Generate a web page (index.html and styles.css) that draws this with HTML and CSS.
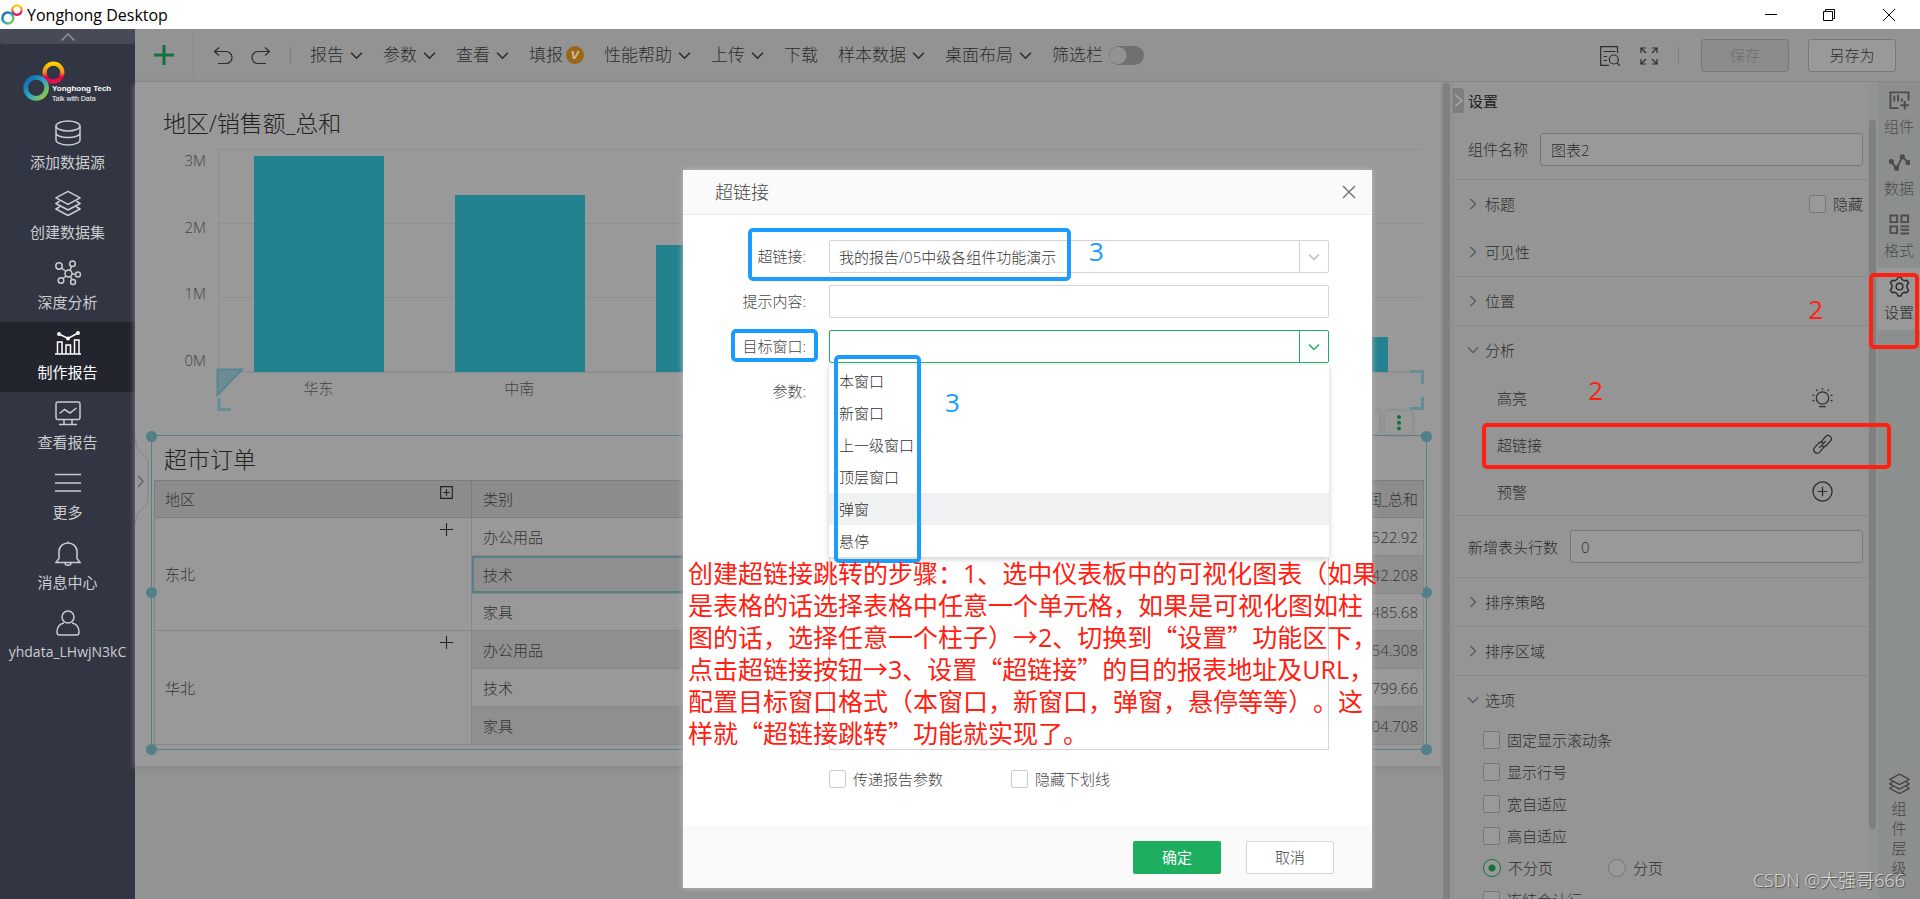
FILE: index.html
```html
<!DOCTYPE html>
<html lang="zh-CN">
<head>
<meta charset="utf-8">
<title>Yonghong Desktop</title>
<link rel="stylesheet" href="styles.css">
</head>
<body>
<svg class="defs" aria-hidden="true">
  <defs>
    <linearGradient id="warm" x1="0" y1="0" x2="0" y2="1"><stop offset="0" stop-color="#fdd000"/><stop offset=".5" stop-color="#f08a1d"/><stop offset=".75" stop-color="#e6004c"/><stop offset="1" stop-color="#e6104c"/></linearGradient>
    <linearGradient id="cool" x1="0" y1="0" x2="1" y2="1"><stop offset="0" stop-color="#0f5fae"/><stop offset=".5" stop-color="#28a5c4"/><stop offset="1" stop-color="#9fd02f"/></linearGradient>
    <symbol id="rings" viewBox="0 0 40 38">
      <circle cx="29" cy="11" r="8.500" fill="none" stroke="url(#warm)" stroke-width="4"/>
      <circle cx="12.500" cy="25.500" r="10" fill="none" stroke="url(#cool)" stroke-width="4.500"/>
    </symbol>
    <symbol id="down" viewBox="0 0 12 12"><path d="M1 3.500l5 5 5-5" fill="none" stroke="currentColor" stroke-width="1.500"/></symbol>
    <symbol id="right" viewBox="0 0 12 12"><path d="M3.500 1l5 5-5 5" fill="none" stroke="currentColor" stroke-width="1.500"/></symbol>
    <symbol id="layers" viewBox="0 0 28 28"><path d="M14 1.500L27 8.500 14 15.500 1 8.500zM5 12l-4 2.500 13 7 13-7L23 12M5 18l-4 2.500 13 7 13-7L23 18" fill="none" stroke="currentColor" stroke-width="1.700" stroke-linejoin="round"/></symbol>
  </defs>
</svg>

<header class="titlebar">
  <svg class="titlebar-logo"><use href="#rings"/></svg>
  <h1 class="titlebar-name">Yonghong Desktop</h1>
  <div class="win-controls">
    <button class="win-btn" aria-label="最小化"><svg viewBox="0 0 12 12"><path d="M0 5.500h12"/></svg></button>
    <button class="win-btn" aria-label="还原"><svg viewBox="0 0 12 12"><path d="M.5 2.500h9v9h-9zM2.500 2.500v-2h9v9h-2"/></svg></button>
    <button class="win-btn" aria-label="关闭"><svg viewBox="0 0 12 12"><path d="M0 0l12 12M12 0L0 12"/></svg></button>
  </div>
</header>

<div class="app">
  <nav class="sidebar">
    <button class="sidebar-fold" aria-label="收起"><svg viewBox="0 0 14 8"><path d="M.5 7.500l6.500-6.500 6.500 6.500"/></svg></button>
    <div class="brand">
      <svg class="brand-mark"><use href="#rings"/></svg>
      <div class="brand-text"><strong>Yonghong Tech</strong><span>Talk with Data</span></div>
    </div>
    <a class="nav-item" href="#"><svg viewBox="0 0 26 26"><ellipse cx="13" cy="6" rx="12" ry="5"/><path d="M1 6v14c0 2.500 5 5 12 5s12-2.500 12-5V6M1 13c0 2.500 5 4.500 12 4.500S25 15.500 25 13"/></svg>添加数据源</a>
    <a class="nav-item" href="#"><svg><use href="#layers"/></svg>创建数据集</a>
    <a class="nav-item" href="#"><svg viewBox="0 0 26 26"><circle cx="13.500" cy="13.500" r="3.500"/><circle cx="4" cy="6" r="3.200"/><circle cx="17.500" cy="3.800" r="2.800"/><circle cx="23" cy="14.500" r="2.500"/><circle cx="6" cy="20.500" r="2.800"/><circle cx="18" cy="22" r="2.500"/><path d="M6.500 8l4.500 3.500M16.500 6.500l-1.500 4M17 14h3.500M8 18.500l3-2.500M15.500 16.500l1.500 3.300"/></svg>深度分析</a>
    <a class="nav-item active" href="#"><svg viewBox="0 0 26 26"><path d="M0 24h26M2.500 24V12h4.500v12M11 24v-9h4.500v9M19.500 24V10H24v14M4 4l9 4.500L23 3"/><circle cx="4" cy="4" r="1.200"/><circle cx="13" cy="8.500" r="1.200"/><circle cx="23" cy="3" r="1.200"/></svg>制作报告</a>
    <a class="nav-item" href="#"><svg viewBox="0 0 26 26"><rect x="1" y="2" width="24" height="17.500" rx="2"/><path d="M4.500 13.500l5-4 5.500 3.500 6.500-5M9 20v4M17 20v4M4 24.500h18"/></svg>查看报告</a>
    <a class="nav-item" href="#"><svg viewBox="0 0 26 26"><path d="M0 4.500h26M0 13h26M0 21h26"/></svg>更多</a>
    <a class="nav-item" href="#"><svg viewBox="0 0 26 26"><path d="M13 1.500v1.500M1 22.500h24l-3-4v-7C22 6.500 18 3 13 3s-9 3.500-9 8.500v7zM10 23c0 3 6 3 6 0"/></svg>消息中心</a>
    <a class="nav-item" href="#"><svg viewBox="0 0 26 26"><circle cx="13" cy="7" r="6"/><path d="M9 13c-5 1-7 5-7 9 0 2 .5 3 2.500 3h17c2 0 2.500-1 2.500-3 0-4-2-8-7-9"/></svg><span class="user">yhdata_LHwjN3kC</span></a>
  </nav>

  <div class="workspace">
    <div class="toolbar">
      <button class="tool add" aria-label="新增"><svg viewBox="0 0 20 20"><path d="M10 0v20M0 10h20"/></svg></button>
      <div class="history">
        <button class="tool" aria-label="撤销"><svg viewBox="0 0 20 18"><path d="M6 .5L1.500 4.500 6 8.500M1.500 4.500H13a5.500 5.500 0 010 12H5"/></svg></button>
        <button class="tool" aria-label="重做"><svg viewBox="0 0 20 18"><path d="M14 .5l4.500 4-4.500 4M18.500 4.500H7a5.500 5.500 0 000 12h8"/></svg></button>
      </div>
      <div class="menus">
        <button class="menu">报告<svg><use href="#down"/></svg></button>
        <button class="menu">参数<svg><use href="#down"/></svg></button>
        <button class="menu">查看<svg><use href="#down"/></svg></button>
        <button class="menu tight">填报<i class="vip">v</i></button>
        <button class="menu">性能帮助<svg><use href="#down"/></svg></button>
        <button class="menu">上传<svg><use href="#down"/></svg></button>
        <button class="menu">下载</button>
        <button class="menu">样本数据<svg><use href="#down"/></svg></button>
        <button class="menu">桌面布局<svg><use href="#down"/></svg></button>
        <label class="menu">筛选栏<input class="toggle" type="checkbox" role="switch"></label>
      </div>
      <div class="tool-right">
        <button class="tool" aria-label="预览"><svg viewBox="0 0 20 20"><path d="M17.500 7V.7H.7v18.600H9M3.500 5.500h12M3.500 10.500H7M3.500 14.500H7"/><circle cx="13.800" cy="13.500" r="4.500"/><path d="M17 17l3 2.800"/></svg></button>
        <button class="tool" aria-label="全屏"><svg viewBox="0 0 20 20"><path d="M2 7V2h5M2 2l5 5M13 2h5v5M18 2l-5 5M2 13v5h5M2 18l5-5M18 13v5h-5M18 18l-5-5"/></svg></button>
      </div>
      <div class="save-group">
        <button class="btn-save" disabled>保存</button>
        <button class="btn-saveas">另存为</button>
      </div>
    </div>

    <div class="stage">
      <main class="canvas">
        <button class="canvas-expand" aria-label="展开"><svg viewBox="0 0 14 84"><path d="M.5 0C1 16 13 14 13 24v36C13 70 1 68 .5 84" class="tab"/><path d="M3 37l5 5.500L3 48"/></svg></button>
        <div class="sheet">
          <section class="chart">
            <h2 class="comp-title">地区/销售额_总和</h2>
            <div class="chart-body">
              <div class="y-axis"><span>3M</span><span>2M</span><span>1M</span><span>0M</span></div>
              <div class="plot-wrap">
                <div class="plot">
                  <div class="bar" style="height:216px"></div>
                  <div class="bar" style="height:177px"></div>
                  <div class="bar" style="height:127px"></div>
                  <div class="bar" style="height:100px"></div>
                  <div class="bar" style="height:70px"></div>
                  <div class="bar" style="height:35px"></div>
                </div>
                <div class="x-axis"><span>华东</span><span>中南</span><span></span><span></span><span></span><span></span></div>
                <svg class="corner-l" viewBox="0 0 30 44"><path d="M1.500 1.500H26L1.500 27z" class="tri"/><path d="M3 30v11.500h12" class="br"/></svg>
                <svg class="corner-r" viewBox="0 0 14 40"><path d="M0 1.500h12.500V14M0 38.500h12.500V27" class="br"/></svg>
              </div>
            </div>
          </section>

          <section class="report">
            <i class="knob tl"></i><i class="knob ml"></i><i class="knob bl"></i>
            <i class="knob tr"></i><i class="knob mr"></i><i class="knob brr"></i>
            <div class="float-tools"><i class="float-blank"></i><button class="float-btn" aria-label="更多操作"><svg viewBox="0 0 4 16"><circle cx="2" cy="2" r="2"/><circle cx="2" cy="7.700" r="2"/><circle cx="2" cy="13.500" r="2"/></svg></button></div>
            <h2 class="comp-title">超市订单</h2>
            <table class="grid">
              <thead><tr><th class="c1">地区<svg class="mark" viewBox="0 0 14 14"><path d="M.7.700h12.600v12.600H.7zM3.500 7h7M7 3.500v7"/></svg></th><th class="c2">类别</th><th class="num">利润_总和</th></tr></thead>
              <tbody>
                <tr><td class="c1" rowspan="3">东北<svg class="mark" viewBox="0 0 14 14"><path d="M0 7h14M7 0v14"/></svg></td><td>办公用品</td><td class="num">,522.92</td></tr>
                <tr class="alt"><td class="picked">技术</td><td class="num">42.208</td></tr>
                <tr><td>家具</td><td class="num">,485.68</td></tr>
                <tr class="alt"><td class="c1" rowspan="3">华北<svg class="mark" viewBox="0 0 14 14"><path d="M0 7h14M7 0v14"/></svg></td><td>办公用品</td><td class="num">354.308</td></tr>
                <tr><td>技术</td><td class="num">,799.66</td></tr>
                <tr class="alt"><td>家具</td><td class="num">304.708</td></tr>
              </tbody>
            </table>
          </section>
        </div>
      </main>
      <div class="scroll"><i class="thumb"></i></div>

      <aside class="panel">
        <div class="panel-head"><button class="panel-fold" aria-label="收起"><svg viewBox="0 0 10 16"><path d="M1.500 1.500L8.500 8l-7 6.500"/></svg></button><h2>设置</h2></div>
        <div class="field"><label for="cname">组件名称</label><input id="cname" type="text" value="图表2"></div>
        <div class="sec no-line"><button class="sec-btn"><svg><use href="#right"/></svg>标题</button><label class="check"><input type="checkbox">隐藏</label></div>
        <div class="sec"><button class="sec-btn"><svg><use href="#right"/></svg>可见性</button></div>
        <div class="sec"><button class="sec-btn"><svg><use href="#right"/></svg>位置</button></div>
        <div class="sec no-line"><button class="sec-btn"><svg><use href="#down"/></svg>分析</button></div>
        <div class="sub">
          <button class="sub-row">高亮<svg viewBox="0 0 22 22"><circle cx="11" cy="11.500" r="6.500"/><path d="M7.500 20.500h7M11 1v2M4.500 2.500l1 1.700M17.500 2.500l-1 1.700M.5 8.500l2 .5M21.500 8.500l-2 .5M.5 14.500l2-.5M21.500 14.500l-2-.5"/></svg></button>
          <button class="sub-row">超链接<svg viewBox="0 0 22 22"><path d="M8.500 9.500l6-7c1.500-1.500 3-1.500 4.500 0s2 3 .5 4.500l-5 5.500c-1.500 1.200-3.500 1-4.500-.5M13.500 12.500l-5.500 6.500c-1.500 1.500-3.500 1.500-5 .2s-1.800-3.200-.5-4.700l5-5.500c1.500-1.200 3.500-1 4.500.5M7.500 14.500l7-7"/></svg></button>
          <button class="sub-row">预警<svg viewBox="0 0 22 22"><circle cx="11" cy="11" r="10"/><path d="M6 11h10M11 6v10"/></svg></button>
        </div>
        <div class="field rows-field"><label for="rows">新增表头行数</label><input id="rows" type="text" value="0"></div>
        <div class="sec"><button class="sec-btn"><svg><use href="#right"/></svg>排序策略</button></div>
        <div class="sec"><button class="sec-btn"><svg><use href="#right"/></svg>排序区域</button></div>
        <div class="sec no-line"><button class="sec-btn"><svg><use href="#down"/></svg>选项</button></div>
        <div class="opts">
          <label class="check"><input type="checkbox">固定显示滚动条</label>
          <label class="check"><input type="checkbox">显示行号</label>
          <label class="check"><input type="checkbox">宽自适应</label>
          <label class="check"><input type="checkbox">高自适应</label>
          <div class="radios"><label class="check"><input type="radio" name="page" checked>不分页</label><label class="check"><input type="radio" name="page">分页</label></div>
          <label class="check"><input type="checkbox">冻结合计行</label>
        </div>
      </aside>
      <div class="scroll panel-scroll"><i class="thumb"></i></div>

      <nav class="strip">
        <a class="strip-item" href="#"><svg viewBox="0 0 22 20"><path d="M10 18H1.500V1.500h19V10M5.500 5v6M9.500 4v7M13.500 8v3M12 15h9M16.500 10.500v9"/></svg>组件</a>
        <a class="strip-item" href="#"><svg viewBox="0 0 22 20"><path d="M2 9l6 7 6-12 6 6"/><g class="dots"><circle cx="2.500" cy="9" r="1.700"/><circle cx="8" cy="16" r="1.700"/><circle cx="14" cy="4" r="1.700"/><circle cx="20" cy="10" r="1.700"/></g></svg>数据</a>
        <a class="strip-item" href="#"><svg viewBox="0 0 22 22"><path d="M1.500 1.500h7v7h-7zM13 1.500h7v7h-7zM1.500 13h7v7h-7zM12 13h9M12 16.500h9M12 20.500h9"/></svg>格式</a>
        <a class="strip-item on" href="#"><svg viewBox="0 0 22 22"><path d="M8.500 3.500L9.500 1h3l1 2.500 2.500 1.500L18.500 4.500 20.500 7 19 9.500v3l1.500 2.500-2 2.500-2.500-.5-2.500 1.500-1 2.500h-3l-1-2.500L6 17l-2.500.5-2-2.500L3 12.500v-3L1.500 7l2-2.500L6 5z"/><circle cx="11" cy="11" r="3.500"/></svg>设置</a>
        <a class="strip-item strip-last" href="#"><svg><use href="#layers"/></svg><span>组件层级</span></a>
      </nav>
    </div>

    <div class="overlay">
      <div class="dialog" role="dialog" aria-labelledby="dlg-title">
        <div class="dlg-head"><h2 id="dlg-title">超链接</h2><button class="dlg-close" aria-label="关闭"><svg viewBox="0 0 14 14"><path d="M1 1l12 12M13 1L1 13"/></svg></button></div>
        <div class="dlg-body">
          <label for="link">超链接:</label>
          <div class="combo"><select id="link"><option>我的报告/05中级各组件功能演示</option></select><span class="arrow"><svg><use href="#down"/></svg></span></div>
          <label for="tip">提示内容:</label>
          <input class="text" id="tip" type="text">
          <label for="target">目标窗口:</label>
          <div class="combo open"><select id="target"><option></option></select><span class="arrow"><svg><use href="#down"/></svg></span>
            <ul class="list"><li>本窗口</li><li>新窗口</li><li>上一级窗口</li><li>顶层窗口</li><li class="hover">弹窗</li><li>悬停</li></ul>
          </div>
          <label for="params">参数:</label>
          <textarea class="params" id="params"></textarea>
          <div class="dlg-checks"><label class="check"><input type="checkbox">传递报告参数</label><label class="check"><input type="checkbox">隐藏下划线</label></div>
        </div>
        <div class="dlg-foot"><button class="ok">确定</button><button class="cancel">取消</button></div>

        <i class="box blue box-link"></i><i class="box blue box-target"></i><i class="box blue box-list"></i>
        <b class="digit blue-text step-a">3</b><b class="digit blue-text step-b">3</b>
        <p class="note">创建超链接跳转的步骤：1、选中仪表板中的可视化图表（如果<br>是表格的话选择表格中任意一个单元格，如果是可视化图如柱<br>图的话，选择任意一个柱子）→2、切换到<span class="q">“</span>设置<span class="q">”</span>功能区下，<br>点击超链接按钮→3、设置<span class="q">“</span>超链接<span class="q">”</span>的目的报表地址及URL，<br>配置目标窗口格式（本窗口，新窗口，弹窗，悬停等等）。这<br>样就<span class="q">“</span>超链接跳转<span class="q">”</span>功能就实现了。</p>
      </div>
      <i class="box red box-row"></i><i class="box red box-tab"></i>
      <b class="digit red-text step-c">2</b><b class="digit red-text step-d">2</b>
      <span class="watermark">CSDN @大强哥666</span>
    </div>
  </div>
</div>
</body>
</html>
```
FILE: styles.css
```css
* { box-sizing: border-box; }
body { margin: 0; height: 100vh; overflow: hidden; display: flex; flex-direction: column; font: 15px/22px "Open Sans", "Noto Sans", "Noto Sans CJK SC", sans-serif; font-weight: 300; color: #2c2c2c; background: #939393; }
h1, h2, p, ul { margin: 0; padding: 0; font-weight: inherit; font-size: inherit; }
ul { list-style: none; }
button, input, select, textarea { font: inherit; color: inherit; margin: 0; }
button { border: 0; padding: 0; background: none; }
a { color: inherit; text-decoration: none; }
svg { fill: none; stroke: currentColor; stroke-width: 1.5; flex: none; }
.defs { position: absolute; width: 0; height: 0; }

.titlebar { height: 29px; flex: none; display: flex; align-items: center; background: #fff; color: #000; padding-left: 1px; }
.titlebar-logo { width: 22px; height: 21px; }
.titlebar-name { font-size: 16px; font-weight: 400; margin-left: 4px; }
.win-controls { margin-left: auto; display: flex; }
.win-btn { width: 58px; height: 27px; display: grid; place-items: center; }
.win-btn svg { width: 12px; height: 12px; stroke-width: 1; }
.win-btn:last-child { width: 62px; }

.app { flex: 1; display: flex; min-height: 0; }
.sidebar { width: 135px; flex: none; background: #323542; color: #cbccd0; display: flex; flex-direction: column; font-weight: 400; }
.sidebar-fold { height: 15px; background: #474a57; color: #8f919a; display: grid; place-items: center; border-radius: 0 0 3px 3px; }
.sidebar-fold svg { width: 14px; height: 8px; }
.brand { height: 68px; display: flex; padding: 17px 0 0 23px; color: #fff; }
.brand-mark { width: 42px; height: 40px; }
.brand-text { display: flex; flex-direction: column; margin: 23px 0 0 -13px; font: 7px/9px "Liberation Sans", sans-serif; white-space: nowrap; }
.brand-text strong { font-size: 8px; line-height: 10px; }
.nav-item { height: 70px; padding-top: 8px; display: flex; flex-direction: column; align-items: center; gap: 5px; }
.nav-item svg { width: 26px; height: 26px; }
.nav-item.active { background: #23252e; color: #fff; }
.user { font-size: 14px; }

.workspace { flex: 1; min-width: 0; display: flex; flex-direction: column; position: relative; }
.toolbar { height: 53px; flex: none; display: flex; align-items: center; background: #939393; border-bottom: 1px solid #888; font-size: 17px; }
.tool { display: grid; place-items: center; }
.tool svg { width: 20px; height: 20px; stroke-width: 1.2; }
.tool.add { width: 59px; height: 44px; border-right: 1px solid #888; color: #12713d; }
.add svg { stroke-width: 3; }
.history { display: flex; gap: 18px; padding: 0 19px; height: 18px; border-right: 1px solid #818181; }
.menus { display: flex; align-items: center; gap: 20px; padding-left: 19px; }
.menu { display: flex; align-items: center; gap: 6px; white-space: nowrap; }
.menu.tight { gap: 3px; }
.menu svg { width: 13px; height: 13px; }
.vip { width: 18px; height: 18px; border-radius: 50%; background: #9c6614; color: #c9b896; font: italic bold 15px/16px "Liberation Sans", sans-serif; text-align: center; }
.toggle { appearance: none; width: 35px; height: 19px; border-radius: 10px; background: radial-gradient(circle at 9px 50%, #939393 8px, #707070 9px); }
.tool-right { margin-left: auto; display: flex; gap: 19px; padding-right: 19px; height: 18px; border-right: 1px solid #818181; }
.save-group { display: flex; gap: 19px; padding: 0 24px 0 22px; font-size: 15px; }
.save-group button { width: 88px; height: 33px; border: 1px solid #777; border-radius: 3px; }
.btn-save { background: #8c8c8c; color: #6e6e6e; }
.btn-saveas { background: #999; }

.stage { flex: 1; display: flex; min-height: 0; }
.canvas { flex: 1; min-width: 0; position: relative; }
.canvas-expand { position: absolute; left: 0; top: 357px; color: #666; z-index: 1; }
.canvas-expand svg { width: 14px; height: 84px; display: block; }
.canvas-expand .tab { stroke: #80838c; stroke-width: 1; fill: #999; }
.sheet { background: #999; padding: 26px 14px 16px 16px; box-shadow: 0 2px 6px #858585; }
.comp-title { font-size: 23px; line-height: 30px; color: #222; padding-left: 12px; }
.chart-body { display: flex; padding: 11px 4px 0 0; font-size: 15px; color: #444; }
.y-axis { width: 67px; padding-right: 12px; height: 222px; text-align: right; display: flex; flex-direction: column; justify-content: space-between; }
.plot-wrap { flex: 1; position: relative; }
.plot { height: 224px; display: grid; grid-template-columns: repeat(6, 1fr); justify-items: center; align-items: end; border: solid #8f8f8f; border-width: 1px 0 1px 1px; background: repeating-linear-gradient(#999 0 73px, #8f8f8f 73px 74px); }
.bar { width: 130px; background: #22828f; }
.x-axis { display: grid; grid-template-columns: repeat(6, 1fr); text-align: center; height: 62px; padding-top: 4px; }
.corner-l { position: absolute; left: -2px; top: 219px; width: 30px; height: 44px; }
.corner-r { position: absolute; right: -1px; top: 221px; width: 14px; height: 40px; }
.tri { fill: #6a8c95; stroke: #5b8690; stroke-width: 2; }
.br { stroke: #648d97; stroke-width: 3; }

.report { position: relative; border: 1px solid #568089; padding: 6px 2px 4px 2px; }
.report .comp-title { padding-left: 10px; line-height: 34px; }
.knob { position: absolute; width: 11px; height: 11px; border-radius: 50%; background: #527f88; }
.tl { left: -6px; top: -5px; } .ml { left: -6px; top: 151px; } .bl { left: -6px; bottom: -6px; }
.tr { right: -6px; top: -5px; } .mr { right: -6px; top: 151px; } .brr { right: -6px; bottom: -6px; }
.float-tools { position: absolute; right: 14px; top: -25px; display: flex; gap: 6px; }
.float-btn, .float-blank { width: 27px; height: 23px; border-radius: 4px; background: #999; box-shadow: 0 0 4px #808080; display: grid; place-items: center; }
.float-btn svg { width: 4px; height: 16px; fill: #12713d; stroke: none; }
.grid { width: 100%; border-collapse: collapse; margin-top: 4px; color: #333; }
.grid th, .grid td { border: 1px solid #878787; padding: 0 11px; height: 38px; text-align: left; font-weight: inherit; position: relative; }
.grid thead th { background: #8c8c8c; border-color: #7d7d7d; height: 37px; }
.grid tbody tr:nth-child(3) td:not([rowspan]) { height: 37px; }
.alt td:not(.c1) { background: #8f8f8f; }
.grid .c1 { width: 317px; padding-left: 10px; }
.grid .c2 { width: 317px; }
.grid .num { text-align: right; padding-right: 5px; }
.grid .picked { box-shadow: inset 0 0 0 2px #568089; }
.mark { position: absolute; right: 18px; top: 5px; width: 13px; height: 13px; color: #222; stroke-width: 1.2; }

.scroll { width: 11px; flex: none; background: #939393; padding: 1px 2px 0; display: flex; }
.thumb { flex: 1; background: #808080; border-radius: 4px 4px 0 0; }
.panel { width: 416px; flex: none; background: #959595; border-left: 1px solid #8c8c8c; overflow: hidden; }
.panel-scroll { width: 10px; padding: 38px 2px 70px 1px; }
.panel-scroll .thumb { border-radius: 4px; }
.panel-head { height: 37px; display: flex; align-items: center; }
.panel-head h2 { font-weight: 400; color: #222; margin-left: 4px; }
.panel-fold { width: 11px; height: 25px; background: #7e7e7e; color: #aaa; display: grid; place-items: center; border-radius: 0 3px 3px 0; }
.panel-fold svg { width: 9px; height: 15px; }
.field { height: 61px; display: flex; align-items: center; gap: 12px; padding: 0 5px 0 15px; border-bottom: 1px solid #888; }
.rows-field { height: 62px; }
.field label { flex: none; }
.field input { flex: 1; min-width: 0; height: 33px; padding: 0 10px; border: 1px solid #777; border-radius: 3px; background: #999; }
.sec { height: 49px; display: flex; align-items: center; justify-content: space-between; padding: 0 5px 0 14px; border-bottom: 1px solid #888; }
.sec.no-line { height: 48px; border: 0; }
.sec-btn { display: flex; align-items: center; gap: 6px; }
.sec-btn svg { width: 12px; height: 12px; color: #5c5c5c; }
.check { display: flex; align-items: center; gap: 7px; }
.check input { appearance: none; width: 17px; height: 18px; border: 1px solid #777; border-radius: 2px; background: #999; }
.check input[type=radio] { width: 18px; height: 18px; border-radius: 50%; }
.check input[type=radio]:checked { border: 1px solid #12713d; background: radial-gradient(circle, #12713d 3px, #999 4px); }
.sub { padding: 0 35px 0 44px; border-bottom: 1px solid #888; }
.sub-row { width: 100%; height: 47px; display: flex; align-items: center; justify-content: space-between; }
.sub-row svg { width: 21px; height: 21px; stroke-width: 1.3; }
.opts { padding-left: 30px; }
.opts .check { height: 32px; }
.radios { display: flex; }
.radios .check { width: 125px; }

.strip { flex: 1 0 42px; max-width: 42px; background: #8b8f8d; color: #4c4c4c; display: flex; flex-direction: column; }
.strip-item { height: 62px; display: flex; flex-direction: column; align-items: center; gap: 4px; padding-top: 8px; }
.strip-item svg { width: 21px; height: 21px; stroke-width: 2; }
.dots { fill: currentColor; }
.strip-item.on { background: #999; color: #2a2a2a; }
.strip-item.on svg { stroke-width: 1.5; }
.strip-last { margin-top: auto; height: 126px; gap: 4px; padding-top: 0; color: #444; }
.strip-last span { width: 15px; line-height: 20px; text-align: center; }

.overlay { position: absolute; inset: 0; display: flex; justify-content: center; align-items: flex-start; padding-top: 141px; }
.dialog { position: relative; width: 689px; background: #fff; box-shadow: 0 0 6px #bbb; color: #444; }
.dlg-head { height: 45px; display: flex; align-items: center; justify-content: space-between; padding: 0 16px 0 32px; background: #fafafa; border-bottom: 1px solid #e8e9ec; font-size: 18px; }
.dlg-close { width: 14px; height: 14px; display: grid; color: #777; }
.dlg-body { display: grid; grid-template-columns: 123px 1fr; column-gap: 23px; row-gap: 12px; padding: 25px 43px 36px 0; }
.dlg-body > label { text-align: right; line-height: 32px; }
.combo { position: relative; display: flex; height: 33px; border: 1px solid #d5d5d5; border-radius: 2px; }
.combo select { flex: 1; appearance: none; border: 0; background: none; padding: 0 9px; color: #333; }
.arrow { width: 29px; border-left: 1px solid #d5d5d5; display: grid; place-items: center; color: #bbb; }
.arrow svg { width: 12px; height: 12px; }
.combo.open, .open .arrow { border-color: #1dae60; color: #1dae60; }
.text { height: 33px; border: 1px solid #d5d5d5; border-radius: 2px; }
.list { position: absolute; left: -1px; right: -1px; top: 34px; background: #fff; box-shadow: 0 2px 6px #ccc; color: #333; z-index: 1; }
.list li { height: 32px; line-height: 32px; padding-left: 10px; }
.list .hover { background: #f0f1f3; }
.params { height: 375px; border: 1px solid #d5d5d5; resize: none; display: block; }
.dlg-checks { grid-column: 2; display: flex; gap: 68px; padding-top: 6px; }
.dialog .check input { background: #fff; border-color: #ccc; }
.dlg-foot { height: 62px; display: flex; justify-content: flex-end; align-items: center; gap: 25px; padding-right: 38px; background: #fafafa; }
.dlg-foot button { width: 88px; height: 33px; border-radius: 2px; }
.ok { background: #1dae60; color: #fff; font-weight: 400; }
.dlg-foot .cancel { border: 1px solid #d5d5d5; background: #fff; }

.box { position: absolute; border: 4px solid; border-radius: 5px; z-index: 2; }
.blue { border-color: #1b9dff; }
.red { border-color: #ff2010; }
.box-link { left: 65px; top: 58px; width: 323px; height: 53px; }
.box-target { left: 48px; top: 159px; width: 87px; height: 33px; }
.box-list { left: 151px; top: 185px; width: 87px; height: 208px; }
.box-row { right: 29px; top: 394px; width: 409px; height: 46px; }
.box-tab { right: 1px; top: 244px; width: 50px; height: 76px; }
.digit { position: absolute; font-size: 26px; line-height: 30px; font-weight: 400; z-index: 2; }
.blue-text { color: #1b9dff; }
.red-text { color: #ff2010; }
.step-a { left: 406px; top: 66px; }
.step-b { left: 262px; top: 217px; }
.step-c { right: 97px; top: 265px; }
.step-d { right: 317px; top: 346px; }
.note { position: absolute; left: 5px; top: 387px; font-size: 25px; line-height: 32px; font-weight: 400; color: #ff2010; white-space: nowrap; text-spacing-trim: space-all; z-index: 2; }
.q { font-family: "Noto Sans CJK SC", sans-serif; line-height: 1; }
.watermark { position: absolute; right: 15px; bottom: 7px; font-size: 18px; line-height: 24px; color: #ddd; text-shadow: 1px 1px 1px #444; }
```
